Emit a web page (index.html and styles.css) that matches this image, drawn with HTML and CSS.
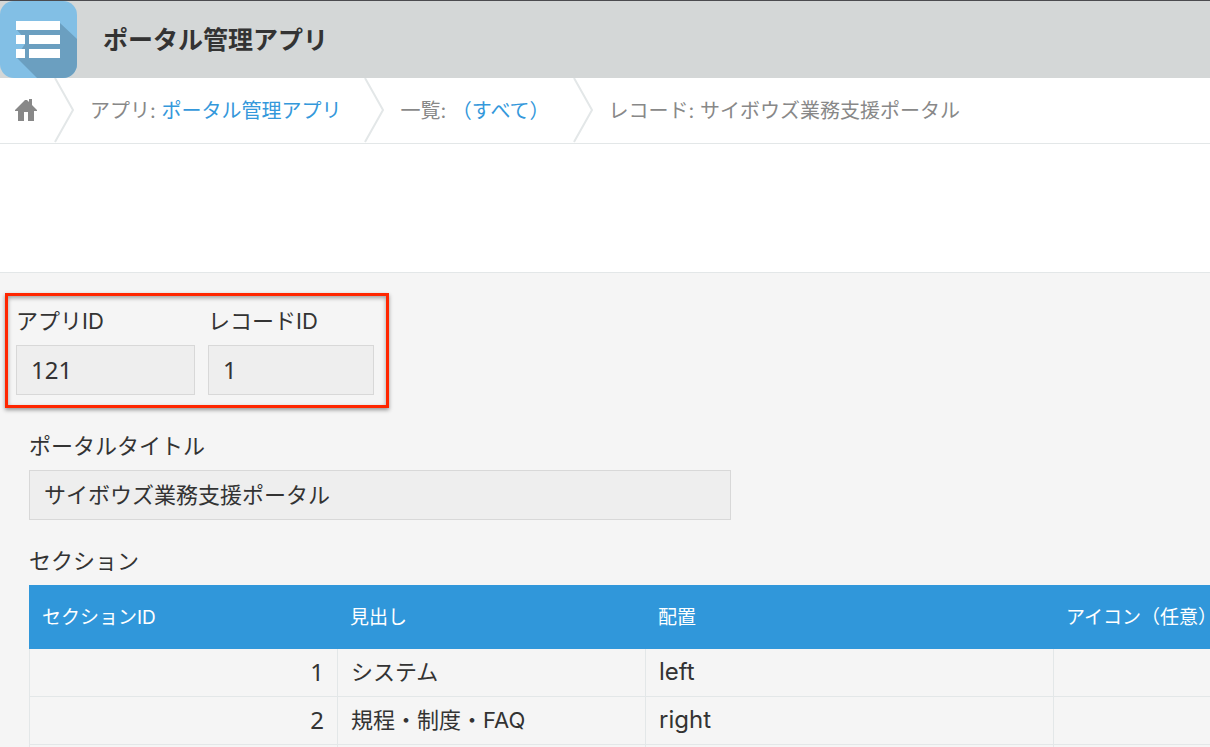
FILE: index.html
```html
<!DOCTYPE html>
<html lang="ja">
<head>
  <meta charset="UTF-8">
  <title>ポータル管理アプリ</title>
  <link rel="stylesheet" href="styles.css">
</head>
<body>
  <header class="app-header">
    <svg class="app-icon" viewBox="0 0 77 77" aria-hidden="true">
      <defs>
        <clipPath id="icon-shape"><rect width="77" height="77" rx="14"/></clipPath>
      </defs>
      <g clip-path="url(#icon-shape)">
        <rect width="77" height="77" fill="#82bfe5"/>
        <path d="M60 22L77 38V77H37L16 56L25 43V38L16 28Z" fill="#6b9fc0"/>
      </g>
      <path d="M16 20h44v9H16zM16 34h9v9h-9zM29 34h31v9H29zM16 48h9v9h-9zM29 48h31v9H29z" fill="#fff"/>
    </svg>
    <h1 class="app-title">ポータル管理アプリ</h1>
  </header>

  <nav class="breadcrumb">
    <a class="home" href="#" aria-label="ホーム">
      <svg width="22" height="24" viewBox="0 0 22 24" aria-hidden="true">
        <path d="M0 11L10 1H12L14 3V0H17V6L22 11V12H19V22H13V13H9V22H3V12H0Z" fill="#888"/>
      </svg>
    </a>
    <svg class="arrow" viewBox="0 0 20 65" aria-hidden="true"><path d="M1 0L19 32L1 64"/></svg>
    <span class="crumb">アプリ: <a href="#">ポータル管理アプリ</a></span>
    <svg class="arrow" viewBox="0 0 20 65" aria-hidden="true"><path d="M1 0L19 32L1 64"/></svg>
    <span class="crumb">一覧: <a href="#">（すべて）</a></span>
    <svg class="arrow" viewBox="0 0 20 65" aria-hidden="true"><path d="M1 0L19 32L1 64"/></svg>
    <span class="crumb">レコード: サイボウズ業務支援ポータル</span>
  </nav>

  <div class="toolbar"></div>

  <main class="record">
    <div class="id-group">
      <div class="field field-app">
        <label for="app-id">アプリID</label>
        <input type="text" id="app-id" value="121" readonly>
      </div>
      <div class="field field-record">
        <label for="record-id">レコードID</label>
        <input type="text" id="record-id" value="1" readonly>
      </div>
    </div>

    <div class="field field-title">
      <label for="portal-title">ポータルタイトル</label>
      <input type="text" id="portal-title" value="サイボウズ業務支援ポータル" readonly>
    </div>

    <table class="sections">
      <caption>セクション</caption>
      <colgroup>
        <col class="col-id">
        <col class="col-heading">
        <col class="col-place">
        <col class="col-icon">
      </colgroup>
      <thead>
        <tr>
          <th>セクションID</th>
          <th>見出し</th>
          <th>配置</th>
          <th>アイコン（任意）</th>
        </tr>
      </thead>
      <tbody>
        <tr>
          <td class="num">1</td>
          <td>システム</td>
          <td class="latin">left</td>
          <td></td>
        </tr>
        <tr>
          <td class="num">2</td>
          <td>規程・制度・FAQ</td>
          <td class="latin">right</td>
          <td></td>
        </tr>
        <tr>
          <td></td>
          <td></td>
          <td></td>
          <td></td>
        </tr>
      </tbody>
    </table>
  </main>
</body>
</html>
```
FILE: styles.css
```css
* {
  box-sizing: border-box;
}

body {
  margin: 0;
  height: 100vh;
  display: flex;
  flex-direction: column;
  overflow: hidden;
  background-color: #f5f5f5;
  color: #333;
  font-family: Inter, "Noto Sans CJK JP", sans-serif;
  font-size: 22px;
  line-height: 32px;
}

a {
  color: #3498db;
  text-decoration: none;
}

.app-header {
  display: flex;
  align-items: center;
  flex: none;
  gap: 26px;
  border-top: 1px solid #4b4b4f;
  background-color: #d4d7d7;
}

.app-icon {
  width: 77px;
  height: 77px;
}

.app-title {
  margin: 0;
  font-size: 25px;
  font-weight: 700;
}

.breadcrumb {
  display: flex;
  align-items: center;
  flex: none;
  height: 66px;
  padding-left: 15px;
  border-bottom: 1px solid #e3e7e8;
  background-color: #fff;
  color: #888;
  font-size: 20px;
  white-space: nowrap;
}

.home {
  display: flex;
  margin-right: 17px;
}

.arrow {
  width: 20px;
  height: 65px;
  fill: none;
  stroke: #e3e7e8;
  stroke-width: 2;
}

.crumb {
  margin: 0 23px 0 16px;
}

.toolbar {
  flex: none;
  height: 129px;
  border-bottom: 1px solid #e3e7e8;
  background-color: #fff;
}

.record {
  flex: 1;
  padding: 20px 0 0 5px;
  overflow: hidden;
}

.id-group {
  display: flex;
  gap: 13px;
  width: 384px;
  padding: 9px 8px 10px;
  border: 3px solid #ff2600;
  box-shadow: 0 2px 4px rgba(0, 0, 0, 0.4), inset 0 2px 4px rgba(0, 0, 0, 0.35);
}

.field {
  display: flex;
  flex-direction: column;
  gap: 8px;
}

.field input {
  width: 100%;
  height: 50px;
  padding: 0 14px 4px;
  border: 1px solid #d8d8d8;
  border-radius: 0;
  background-color: #eee;
  color: #333;
  font: inherit;
  outline: none;
}

.field-app {
  width: 179px;
}

.field-record {
  width: 166px;
}

.id-group input {
  padding-bottom: 2px;
  font-family: "Noto Sans", sans-serif;
  font-size: 24px;
}

.field-title {
  max-width: 702px;
  margin: 22px 0 0 24px;
}

.sections {
  width: 1332px;
  margin: 25px 0 0 24px;
  border-collapse: separate;
  border-spacing: 0;
  table-layout: fixed;
}

.sections caption {
  padding-bottom: 8px;
  text-align: left;
}

.col-id,
.col-heading {
  width: 308px;
}

.col-place {
  width: 408px;
}

.sections th {
  height: 64px;
  padding: 2px 13px 0;
  background-color: #3097da;
  color: #fff;
  font-size: 19px;
  font-weight: 400;
  text-align: left;
}

.sections td {
  height: 48px;
  padding: 0 13px 2px;
  border-bottom: 1px solid #e3e7e8;
  border-left: 1px solid #e3e7e8;
}

.sections .num {
  font-family: "Noto Sans", sans-serif;
  font-size: 24px;
  text-align: right;
}

.sections .latin {
  font-size: 24px;
}
```
